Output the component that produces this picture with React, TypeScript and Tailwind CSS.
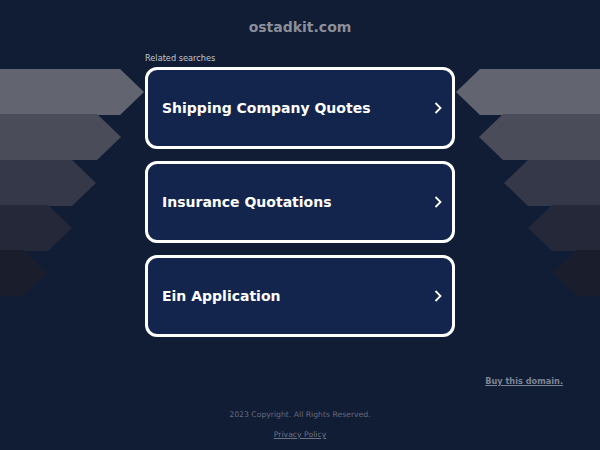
import React from 'react';

const searches = ['Shipping Company Quotes', 'Insurance Quotations', 'Ein Application'];

const bands = [
  { y: 69, rect: 120, fill: '#62646f' },
  { y: 114, rect: 97, fill: '#4a4c5a' },
  { y: 160, rect: 72, fill: '#353848' },
  { y: 205, rect: 48, fill: '#252838' },
  { y: 250, rect: 23, fill: '#1a1d2c' },
];

const Arrows = ({ flip }: { flip?: boolean }) => (
  <svg
    width="150"
    height="300"
    viewBox="0 0 150 300"
    className={flip ? 'absolute right-0 top-0 -scale-x-100' : 'absolute left-0 top-0'}
  >
    {bands.map((b) => (
      <polygon
        key={b.y}
        fill={b.fill}
        points={`0,${b.y} ${b.rect},${b.y} ${b.rect + 24},${b.y + 23} ${b.rect},${b.y + 46} 0,${b.y + 46}`}
      />
    ))}
  </svg>
);

const Chevron = () => (
  <svg width="12" height="14" viewBox="0 0 12 14" fill="none">
    <path d="M3.5 2 L8.5 7 L3.5 12" stroke="white" strokeWidth="1.8" />
  </svg>
);

export default function App() {
  return (
    <div
      className="relative w-[600px] h-[450px] overflow-hidden bg-[#111c35]"
      style={{ fontFamily: '"DejaVu Sans", sans-serif' }}
    >
      <Arrows />
      <Arrows flip />
      <div className="relative flex flex-col items-center">
        <h1 className="mt-[19px] text-[14px] leading-[17px] font-bold text-[#8b8f99]">ostadkit.com</h1>
        <div className="w-[310px] mt-[17px]">
          <p className="text-[8.2px] leading-[11px] text-[#c3c7cf]">Related searches</p>
          <div className="flex flex-col gap-[12px] mt-[3px]">
            {searches.map((s) => (
              <div
                key={s}
                className="h-[82px] rounded-[12px] border-[3px] border-white bg-[#13254c] flex items-center justify-between pl-[14px] pr-[8px]"
              >
                <span className="text-[14px] font-bold text-white">{s}</span>
                <Chevron />
              </div>
            ))}
          </div>
        </div>
        <div className="w-full flex justify-end pr-[37px] mt-[38px]">
          <a className="text-[8.2px] leading-[12px] font-bold text-[#7d8392] underline">Buy this domain.</a>
        </div>
        <p className="mt-[23px] text-[7.7px] leading-[10px] text-[#646b7c]">2023 Copyright. All Rights Reserved.</p>
        <a className="mt-[10px] text-[7.7px] leading-[10px] text-[#6c7384] underline">Privacy Policy</a>
      </div>
    </div>
  );
}
